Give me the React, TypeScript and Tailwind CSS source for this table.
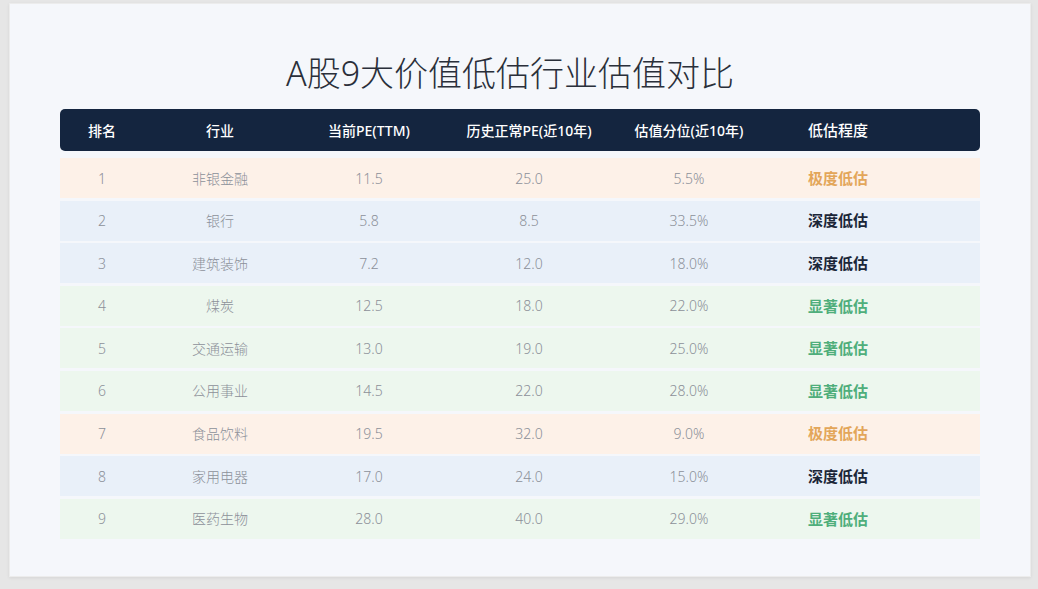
const rows = [
  { rank: 1, name: "非银金融", pe: "11.5", hist: "25.0", pct: "5.5%", level: "极度低估", kind: "o" },
  { rank: 2, name: "银行", pe: "5.8", hist: "8.5", pct: "33.5%", level: "深度低估", kind: "b" },
  { rank: 3, name: "建筑装饰", pe: "7.2", hist: "12.0", pct: "18.0%", level: "深度低估", kind: "b" },
  { rank: 4, name: "煤炭", pe: "12.5", hist: "18.0", pct: "22.0%", level: "显著低估", kind: "g" },
  { rank: 5, name: "交通运输", pe: "13.0", hist: "19.0", pct: "25.0%", level: "显著低估", kind: "g" },
  { rank: 6, name: "公用事业", pe: "14.5", hist: "22.0", pct: "28.0%", level: "显著低估", kind: "g" },
  { rank: 7, name: "食品饮料", pe: "19.5", hist: "32.0", pct: "9.0%", level: "极度低估", kind: "o" },
  { rank: 8, name: "家用电器", pe: "17.0", hist: "24.0", pct: "15.0%", level: "深度低估", kind: "b" },
  { rank: 9, name: "医药生物", pe: "28.0", hist: "40.0", pct: "29.0%", level: "显著低估", kind: "g" },
];

const rowBg: Record<string, string> = {
  o: "bg-[#fdf1e8]",
  b: "bg-[#e9f0f9]",
  g: "bg-[#edf7ee]",
};

const levelColor: Record<string, string> = {
  o: "text-[#e3a65a]",
  b: "text-[#1b2638]",
  g: "text-[#4fae7b]",
};

const cols = "grid grid-cols-[84px_152px_146px_174px_146px_152px_1fr] items-center text-center";

export default function App() {
  return (
    <div
      className="w-[1038px] h-[589px] bg-[#e6e6e6] pt-[3px] pl-[9px] overflow-hidden"
      style={{ fontFamily: '"Noto Sans", "Noto Sans CJK SC", sans-serif' }}
    >
      <div className="w-[1022px] h-[574px] bg-[#f5f7fb] border border-[#ececec] shadow-[0_1px_3px_rgba(0,0,0,0.08)]">
        <h1 className="pt-[41px] pr-[20px] text-center text-[34px] leading-[56px] font-light text-[#2a2f3a]">
          A股9大价值低估行业估值对比
        </h1>
        <div className="mx-[50px] mt-[8px]">
          <div className={`${cols} h-[42px] rounded-[5px] bg-[#14253f] text-white text-[14px] font-medium`}>
            <div>排名</div>
            <div>行业</div>
            <div>当前PE(TTM)</div>
            <div>历史正常PE(近10年)</div>
            <div>估值分位(近10年)</div>
            <div className="text-[15px]">低估程度</div>
            <div />
          </div>
          <div className="mt-[7px] flex flex-col gap-[2.6px]">
            {rows.map((r) => (
              <div
                key={r.rank}
                className={`${cols} h-[40px] ${rowBg[r.kind]} text-[14px] font-light text-[#8c9099]`}
              >
                <div>{r.rank}</div>
                <div>{r.name}</div>
                <div>{r.pe}</div>
                <div>{r.hist}</div>
                <div>{r.pct}</div>
                <div className={`text-[15px] font-bold ${levelColor[r.kind]}`}>{r.level}</div>
                <div />
              </div>
            ))}
          </div>
        </div>
      </div>
    </div>
  );
}
